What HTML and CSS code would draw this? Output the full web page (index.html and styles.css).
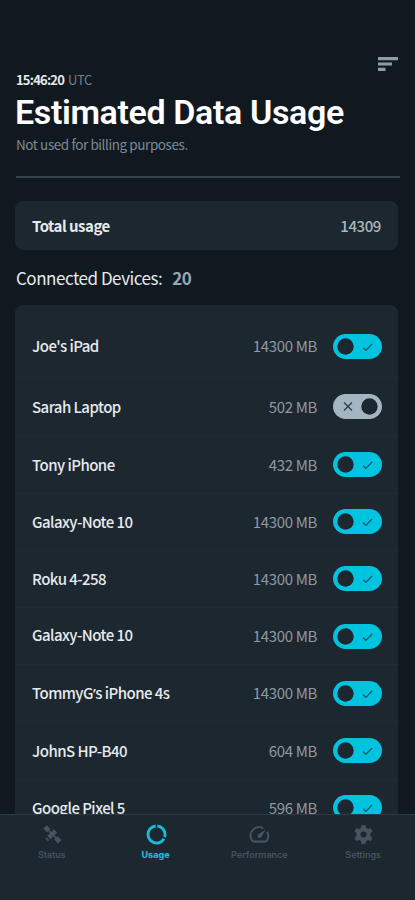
FILE: index.html
```html
<!DOCTYPE html>
<html lang="en">
<head>
<meta charset="utf-8">
<meta name="viewport" content="width=device-width">
<title>Estimated Data Usage</title>
<link rel="stylesheet" href="styles.css">
</head>
<body>
<svg class="defs" width="0" height="0">
  <symbol id="on" viewBox="0 0 49 25"><rect width="49" height="25" rx="12.500" fill="#00c3df"/><circle cx="12.500" cy="12.500" r="8.200" fill="#1d2730"/><path d="M30 13.500l2.800 3 6.300-6.500" fill="none" stroke="#155365" stroke-width="1.2"/></symbol>
  <symbol id="off" viewBox="0 0 49 25"><rect width="49" height="25" rx="12.500" fill="#a4b5c2"/><circle cx="36.500" cy="12.500" r="8.200" fill="#1d2730"/><path d="M11 8.500l8 8M19 8.500l-8 8" fill="none" stroke="#2b3a45" stroke-width="1.2"/></symbol>
</svg>
<div class="screen">
  <main>
    <header>
      <svg class="sort" viewBox="0 0 20 14"><path d="M0 0h20v3.2H0zM0 5.4h14v3.2H0zM0 10.8h7.5V14H0z"/></svg>
      <p class="time"><b>15:46:20</b><span>UTC</span></p>
      <h1>Estimated Data Usage</h1>
      <p class="note">Not used for billing purposes.</p>
    </header>
    <section class="total"><b>Total usage</b><span>14309</span></section>
    <h2>Connected Devices:<b>20</b></h2>
    <ul class="devices">
      <li><span class="name">Joe's iPad</span><span class="mb">14300 MB</span><svg class="toggle"><use href="#on"/></svg></li>
      <li><span class="name">Sarah Laptop</span><span class="mb">502 MB</span><svg class="toggle"><use href="#off"/></svg></li>
      <li><span class="name">Tony iPhone</span><span class="mb">432 MB</span><svg class="toggle"><use href="#on"/></svg></li>
      <li><span class="name">Galaxy-Note 10</span><span class="mb">14300 MB</span><svg class="toggle"><use href="#on"/></svg></li>
      <li><span class="name">Roku 4-258</span><span class="mb">14300 MB</span><svg class="toggle"><use href="#on"/></svg></li>
      <li><span class="name raised">Galaxy-Note 10</span><span class="mb">14300 MB</span><svg class="toggle"><use href="#on"/></svg></li>
      <li><span class="name">TommyG<span class="apostrophe">’</span>s iPhone 4s</span><span class="mb">14300 MB</span><svg class="toggle"><use href="#on"/></svg></li>
      <li><span class="name">JohnS HP-B40</span><span class="mb">604 MB</span><svg class="toggle"><use href="#on"/></svg></li>
      <li><span class="name">Google Pixel 5</span><span class="mb">596 MB</span><svg class="toggle"><use href="#on"/></svg></li>
    </ul>
  </main>
  <nav>
    <a><svg viewBox="0 0 24 24"><g transform="rotate(45 12 12)" fill="currentColor"><path d="M-1.500 9h7v6h-7zM8.500 6h6v12h-6zM18 9h7v6h-7zM6 11h12v2H6z"/><path d="M9 20h5v2H9z"/></g></svg>Status</a>
    <a class="active"><svg viewBox="0 0 24 24"><circle cx="12" cy="12" r="10.800" fill="none" stroke="currentColor" stroke-width="3.600" pathLength="60" stroke-dasharray="17 2 39 2" stroke-dashoffset="-1" transform="rotate(-90 12 12)"/></svg>Usage</a>
    <a><svg viewBox="0 0 24 24"><path d="M16.500 4.300A10.500 10.500 0 0 0 2 18.500Q3 21 5 21h14Q21 21 22 18.500A10.500 10.500 0 0 0 21.500 8.500" fill="none" stroke="currentColor" stroke-width="2.600"/><path d="M20 5.500l-9 6a2.600 2.600 0 1 0 3.500 3.500z" fill="currentColor"/></svg>Performance</a>
    <a><svg viewBox="0 0 24 24"><path fill="currentColor" fill-rule="evenodd" d="M9.600 0h4.800l.7 3.400 2.600 1.500 3.300-1.200 2.400 4.200-2.600 2.600v3l2.600 2.600-2.400 4.200-3.300-1.200-2.600 1.500-.7 3.400H9.600l-.7-3.400-2.600-1.500L3 20.300.6 16.100l2.600-2.600v-3L.6 7.900 3 3.700l3.300 1.200 2.600-1.500zM12 8.200a3.800 3.800 0 1 0 0 7.600a3.800 3.800 0 1 0 0-7.600z"/></svg>Settings</a>
  </nav>
</div>
</body>
</html>
```
FILE: styles.css
```css
* { box-sizing: border-box; }
body, h1, h2, p, ul { margin: 0; padding: 0; }
body { background: #111920; color: #e6eaed; font-family: "Noto Sans CJK SC", sans-serif; }
.defs { display: block; }
.screen { height: 900px; display: flex; flex-direction: column; overflow: hidden; }
main { flex: 1; min-height: 0; overflow: hidden; }
header { margin: 0 15px 0 16px; padding-top: 57px; height: 178px; border-bottom: 2px solid #36434d; display: flex; flex-direction: column; }
.sort { width: 20px; height: 14px; align-self: flex-end; margin-right: 2px; fill: #8f9ca6; }
.time { display: flex; gap: 4px; margin-top: 1px; font-size: 13px; line-height: 16px; }
.time b { letter-spacing: -0.8px; }
.time span { color: #727f89; letter-spacing: -0.4px; }
h1 { margin: 7px 0 0 -1px; font: 600 34px/34px Roboto, sans-serif; letter-spacing: -0.37px; color: #fff; white-space: nowrap; }
.note { margin-top: 6px; font-size: 13.500px; line-height: 18px; letter-spacing: -0.42px; color: #7d8992; }
.total { margin: 23px 17px 0 15px; padding: 0 17px; height: 49px; border-radius: 8px; background: #1d2730; display: flex; justify-content: space-between; align-items: center; font-size: 15px; letter-spacing: -0.5px; }
.total span { color: #a8b5bf; font-weight: 500; letter-spacing: -0.4px; }
h2 { margin: 16px 16px 0; height: 24px; line-height: 24px; font-size: 17px; font-weight: 400; letter-spacing: -0.48px; display: flex; gap: 10px; }
h2 b { color: #94a7b6; }
.devices { list-style: none; margin: 15px 17px 0 15px; padding: 10px 0 0; border-radius: 8px 8px 0 0; background: #1d2730; }
li { height: 57.200px; padding: 0 16px 0 17px; border-bottom: 1px solid #212b34; display: flex; align-items: center; font-size: 15px; line-height: 20px; }
li:first-child { height: 63px; }
li:nth-child(2) { height: 58.500px; }
.name { flex: 1; font-weight: 500; letter-spacing: -0.54px; }
.apostrophe { font-family: "Noto Sans", sans-serif; }
.raised { padding-bottom: 2px; }
.mb { color: #8d99a3; margin-right: 16px; letter-spacing: -0.35px; }
.toggle { display: block; width: 49px; height: 25px; }
nav { height: 86px; padding-top: 10px; border-top: 1px solid #303c45; background: #1d2730; display: grid; grid-template-columns: repeat(4, 1fr); }
nav a { display: flex; flex-direction: column; align-items: center; color: #46535e; font: 600 9px/12px Inter, sans-serif; }
nav svg { width: 19px; height: 19px; margin: 0 0 5px 1px; overflow: visible; }
nav .active { color: #13bed7; font-weight: 800; }
```
